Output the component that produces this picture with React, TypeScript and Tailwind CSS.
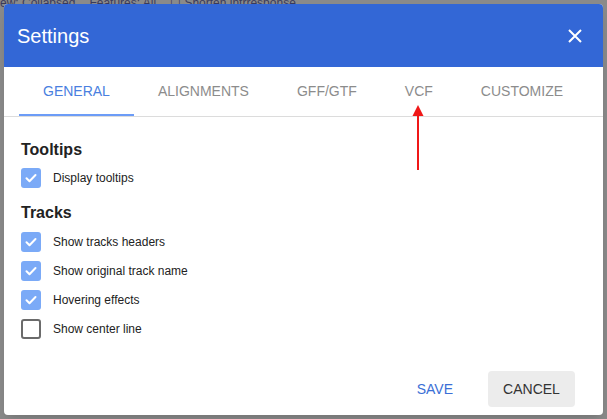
import React from 'react';

const font = { fontFamily: '"Liberation Sans", Arial, sans-serif' };

const tabs = ['GENERAL', 'ALIGNMENTS', 'GFF/GTF', 'VCF', 'CUSTOMIZE'];

const Check = ({ checked }: { checked: boolean }) =>
  checked ? (
    <div className="w-[20px] h-[20px] rounded-[3px] bg-[#7baaf7] flex items-center justify-center">
      <svg width="14" height="14" viewBox="0 0 14 14" fill="none">
        <path d="M2.5 7.2l3 3L11.5 4" stroke="#fff" strokeWidth="2" strokeLinecap="round" strokeLinejoin="round" />
      </svg>
    </div>
  ) : (
    <div className="w-[20px] h-[20px] rounded-[3px] border-2 border-[#6b6b6b] bg-white" />
  );

const Row = ({ label, checked }: { label: string; checked: boolean }) => (
  <div className="flex items-center h-[20px]">
    <Check checked={checked} />
    <span className="ml-[12px] text-[12px] text-[#222]">{label}</span>
  </div>
);

export default function App() {
  return (
    <div className="relative w-[607px] h-[419px] bg-[#8a8a8a] overflow-hidden pt-[4px] pl-[4px]" style={font}>
      {/* dim app behind */}
      <div className="absolute top-[-6px] left-0 flex gap-[14px] text-[12px] text-[#3a3a5a] whitespace-nowrap">
        <span>ew: Collapsed</span>
        <span>Features: All</span>
        <span>☐ Shorten intrresponse</span>
      </div>

      <div className="relative w-[599px] h-[411px] bg-white rounded-[4px] overflow-hidden flex flex-col shadow-lg">
        {/* Header */}
        <div className="h-[63px] bg-[#3367d6] flex items-center justify-between pl-[13px] pr-[21px] shrink-0">
          <span className="text-[20px] text-white">Settings</span>
          <svg width="14" height="14" viewBox="0 0 14 14">
            <path d="M1 1l12 12M13 1L1 13" stroke="#fff" strokeWidth="2" />
          </svg>
        </div>

        {/* Tabs */}
        <div className="h-[50px] border-b border-[#dcdcdc] flex pl-[15px] shrink-0">
          {tabs.map((t, i) => (
            <div
              key={t}
              className={
                'relative px-6 h-[49px] flex items-center text-[14px] ' +
                (i === 0 ? 'text-[#4a7fe0]' : 'text-[#8c8c8c]')
              }
            >
              {t}
              {i === 0 && <div className="absolute left-0 right-0 bottom-0 h-[2px] bg-[#6c9cf7]" />}
            </div>
          ))}
        </div>

        {/* Content */}
        <div className="pl-[17px] pt-[23px] flex flex-col">
          <div className="h-[20px] leading-[20px] text-[16px] font-bold text-[#222]">Tooltips</div>
          <div className="mt-[8px]">
            <Row label="Display tooltips" checked />
          </div>
          <div className="mt-[15px] h-[20px] leading-[20px] text-[16px] font-bold text-[#222]">Tracks</div>
          <div className="mt-[9px] flex flex-col gap-[9px]">
            <Row label="Show tracks headers" checked />
            <Row label="Show original track name" checked />
            <Row label="Hovering effects" checked />
            <Row label="Show center line" checked={false} />
          </div>
        </div>

        <div className="flex-1" />

        {/* Footer */}
        <div className="flex justify-end items-center gap-[19px] pr-[28px] pb-[8px]">
          <button className="h-[36px] px-[16px] text-[14px] text-[#3b6fd6]">SAVE</button>
          <button className="h-[36px] w-[87px] rounded-[4px] bg-[#ececec] text-[14px] text-[#333]">CANCEL</button>
        </div>

        {/* annotation arrow */}
        <svg className="absolute left-[408px] top-[96px]" width="12" height="72" viewBox="0 0 12 72">
          <path d="M6 14V70" stroke="#f01818" strokeWidth="2" />
          <path d="M0.5 16L6 5l5.5 11z" fill="#f01818" />
        </svg>
      </div>
    </div>
  );
}
